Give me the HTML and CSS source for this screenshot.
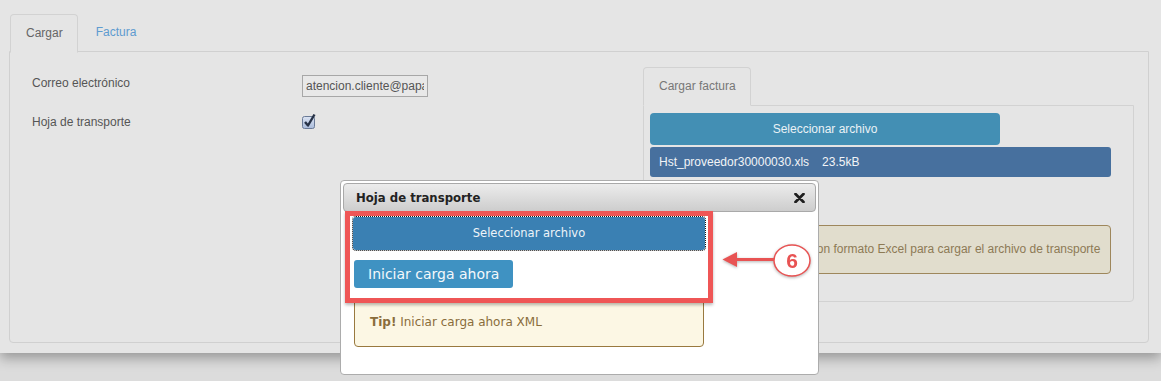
FILE: index.html
```html
<!DOCTYPE html>
<html lang="es">
<head>
<meta charset="utf-8">
<title>Cargar</title>
<link rel="stylesheet" href="styles.css">
</head>
<body>
<div class="page">
  <div class="tabs">
    <div class="tab tab-active">Cargar</div>
    <div class="tab tab-link">Factura</div>
  </div>
  <div class="panel">
    <div class="form">
      <div class="row row-mail">
        <label class="lbl">Correo electrónico</label>
        <input class="inp" type="text" value="atencion.cliente@papasyasociados.com">
      </div>
      <div class="row row-chk">
        <label class="lbl">Hoja de transporte</label>
        <span class="chk">
          <svg width="14" height="16" viewBox="0 0 14 16">
            <defs>
              <linearGradient id="cg" x1="0" y1="0" x2="0" y2="1">
                <stop offset="0" stop-color="#dbe3f2"/>
                <stop offset="1" stop-color="#a9bbdb"/>
              </linearGradient>
            </defs>
            <rect x="0.5" y="3.5" width="12" height="12" rx="2" fill="url(#cg)" stroke="#6a7a96"/>
            <path d="M3 9 L6 12.5 L12.5 1.5" fill="none" stroke="#273247" stroke-width="2.4" stroke-linejoin="round"/>
          </svg>
        </span>
      </div>
    </div>
    <div class="side">
      <div class="subtabs"><div class="subtab">Cargar factura</div></div>
      <div class="subpanel">
        <div class="btn-sel">Seleccionar archivo</div>
        <div class="file">Hst_proveedor30000030.xls<span class="size">23.5kB</span></div>
        <div class="alert-side"><b>Tip!</b> Seleccione un archivo con formato Excel para cargar el archivo de transporte</div>
      </div>
    </div>
  </div>

  <div class="dialog">
    <div class="dlg-head">
      <span class="dlg-title">Hoja de transporte</span>
      <svg class="dlg-close" width="11" height="10" viewBox="0 0 11 10">
        <path d="M1.5 1 L9.5 9 M9.5 1 L1.5 9" stroke="#1e1e1e" stroke-width="2.7" stroke-linecap="round"/>
      </svg>
    </div>
    <div class="dlg-body">
      <div class="dbtn-sel">Seleccionar archivo</div>
      <div class="dbtn-go">Iniciar carga ahora</div>
      <div class="dtip"><b>Tip!</b> Iniciar carga ahora XML</div>
    </div>
    <div class="hl-box"></div>
    <svg class="callout" width="95" height="42" viewBox="0 0 95 42">
      <polygon points="2.5,19.5 17,12 17,27" fill="#e85353"/>
      <rect x="16" y="18" width="38" height="3" fill="#e85353"/>
      <ellipse cx="72" cy="20.5" rx="18" ry="15.5" fill="#ffffff" stroke="#e85353" stroke-width="1.5"/>
      <text x="72" y="28" text-anchor="middle" class="callout-num">6</text>
    </svg>
  </div>
</div>
</body>
</html>
```

FILE: styles.css
```css
html, body {
  margin: 0;
  padding: 0;
}

body {
  width: 1161px;
  height: 381px;
  overflow: hidden;
  background: #dcdcdc;
  font-family: "Liberation Sans", Arial, sans-serif;
  font-size: 12px;
  color: #555;
}

.page {
  position: relative;
  height: 353px;
  box-sizing: border-box;
  padding: 14px 12px 0 9px;
  background: #e5e5e5;
  box-shadow: 0 5px 12px rgba(0, 0, 0, 0.32);
}

/* top tabs */
.tabs {
  display: flex;
  height: 38px;
  padding-left: 1px;
  position: relative;
  z-index: 1;
  margin-bottom: -1px;
}

.tab {
  box-sizing: border-box;
  height: 39px;
  line-height: 37px;
  padding: 0 14px 0 15px;
}

.tab-active {
  border: 1px solid #d2d2d2;
  border-bottom-color: #e5e5e5;
  border-radius: 4px 4px 0 0;
  background: #e5e5e5;
  color: #666;
}

.tab-link {
  color: #5e9bd0;
  padding-left: 18px;
}

/* main panel */
.panel {
  display: flex;
  box-sizing: border-box;
  height: 292px;
  border: 1px solid #d0d0d0;
  border-radius: 0 0 4px 4px;
  padding: 15px 14px 0 22px;
}

.form {
  flex: 1;
  padding-top: 8px;
}

.row {
  display: flex;
  align-items: flex-start;
}

.row-mail {
  height: 22px;
}

.row-chk {
  margin-top: 17px;
}

.lbl {
  width: 270px;
  line-height: 16px;
  color: #555;
}

.inp {
  box-sizing: border-box;
  width: 126px;
  height: 22px;
  margin: 0;
  padding: 0 3px;
  border: 1px solid #a7a7a7;
  border-radius: 0;
  background: #e8e8e8;
  font-family: "Liberation Sans", Arial, sans-serif;
  font-size: 12px;
  color: #555;
  outline: none;
}

.chk {
  display: block;
  width: 14px;
  height: 16px;
  margin-top: -1px;
}

.chk svg {
  display: block;
}

/* right side */
.side {
  width: 491px;
}

.subtabs {
  display: flex;
  position: relative;
  z-index: 1;
  margin-bottom: -1px;
}

.subtab {
  box-sizing: border-box;
  height: 39px;
  line-height: 37px;
  padding: 0 14px 0 15px;
  border: 1px solid #d2d2d2;
  border-bottom-color: #e5e5e5;
  border-radius: 4px 4px 0 0;
  color: #777;
}

.subpanel {
  box-sizing: border-box;
  height: 197px;
  border: 1px solid #d2d2d2;
  border-radius: 0 0 4px 4px;
  padding: 7px 0 0 6px;
}

.btn-sel {
  box-sizing: border-box;
  width: 350px;
  height: 32px;
  line-height: 32px;
  text-align: center;
  background: #438fb4;
  border-radius: 4px;
  color: #eaf2f6;
}

.file {
  box-sizing: border-box;
  width: 461px;
  height: 30px;
  line-height: 30px;
  margin-top: 2px;
  padding-left: 9px;
  background: #47709e;
  border-radius: 3px;
  color: #f2f4f7;
}

.size {
  margin-left: 13px;
}

.alert-side {
  box-sizing: border-box;
  width: 461px;
  height: 49px;
  line-height: 47px;
  margin-top: 48px;
  padding-left: 14px;
  background: #e1ddcd;
  border: 1px solid #9e875c;
  border-radius: 4px;
  color: #8d7a55;
  white-space: nowrap;
  overflow: hidden;
}

/* dialog */
.dialog {
  position: absolute;
  left: 340px;
  top: 180px;
  width: 479px;
  height: 195px;
  box-sizing: border-box;
  padding: 2px;
  background: #ffffff;
  border: 1px solid #acacac;
  border-radius: 4px;
  font-family: "DejaVu Sans", Verdana, sans-serif;
  z-index: 5;
}

.dlg-head {
  display: flex;
  align-items: center;
  justify-content: space-between;
  box-sizing: border-box;
  height: 29px;
  padding: 0 10px 0 12px;
  border: 1px solid #a9a9a9;
  border-radius: 4px;
  background: linear-gradient(#ececec, #cdcdcd);
}

.dlg-title {
  font-weight: bold;
  font-size: 11.7px;
  color: #222;
}

.dlg-close {
  display: block;
}

.dlg-body {
  padding: 5px 0 0 10px;
}

.dbtn-sel {
  box-sizing: border-box;
  width: 352px;
  height: 33px;
  line-height: 33px;
  text-align: center;
  font-size: 11.5px;
  color: #eef4f9;
  background: #3a80b3;
  border-radius: 3px;
  outline: 1px dotted #1a1a1a;
}

.dbtn-go {
  box-sizing: border-box;
  width: 159px;
  height: 28px;
  line-height: 28px;
  margin: 10px 0 0 1px;
  padding-left: 14px;
  font-size: 14px;
  color: #f4f8fb;
  background: #3f92c2;
  border-radius: 3px;
}

.dtip {
  box-sizing: border-box;
  width: 350px;
  height: 49px;
  line-height: 47px;
  margin: 10px 0 0 1px;
  padding-left: 15px;
  font-size: 12px;
  color: #8a6d3b;
  background: #fcf7e4;
  border: 1px solid #99793f;
  border-radius: 4px;
}

/* annotation overlay */
.hl-box {
  position: absolute;
  left: 4px;
  top: 30px;
  width: 368px;
  height: 92px;
  box-sizing: border-box;
  border: 5px solid #ef5656;
  box-shadow: 0 2px 3px rgba(0, 0, 0, 0.28);
}

.callout {
  position: absolute;
  left: 379px;
  top: 59px;
  filter: drop-shadow(0 1px 1.5px rgba(0, 0, 0, 0.3));
}

.callout-num {
  font-family: "Liberation Sans", Arial, sans-serif;
  font-weight: bold;
  font-size: 21px;
  fill: #e85353;
}
```
